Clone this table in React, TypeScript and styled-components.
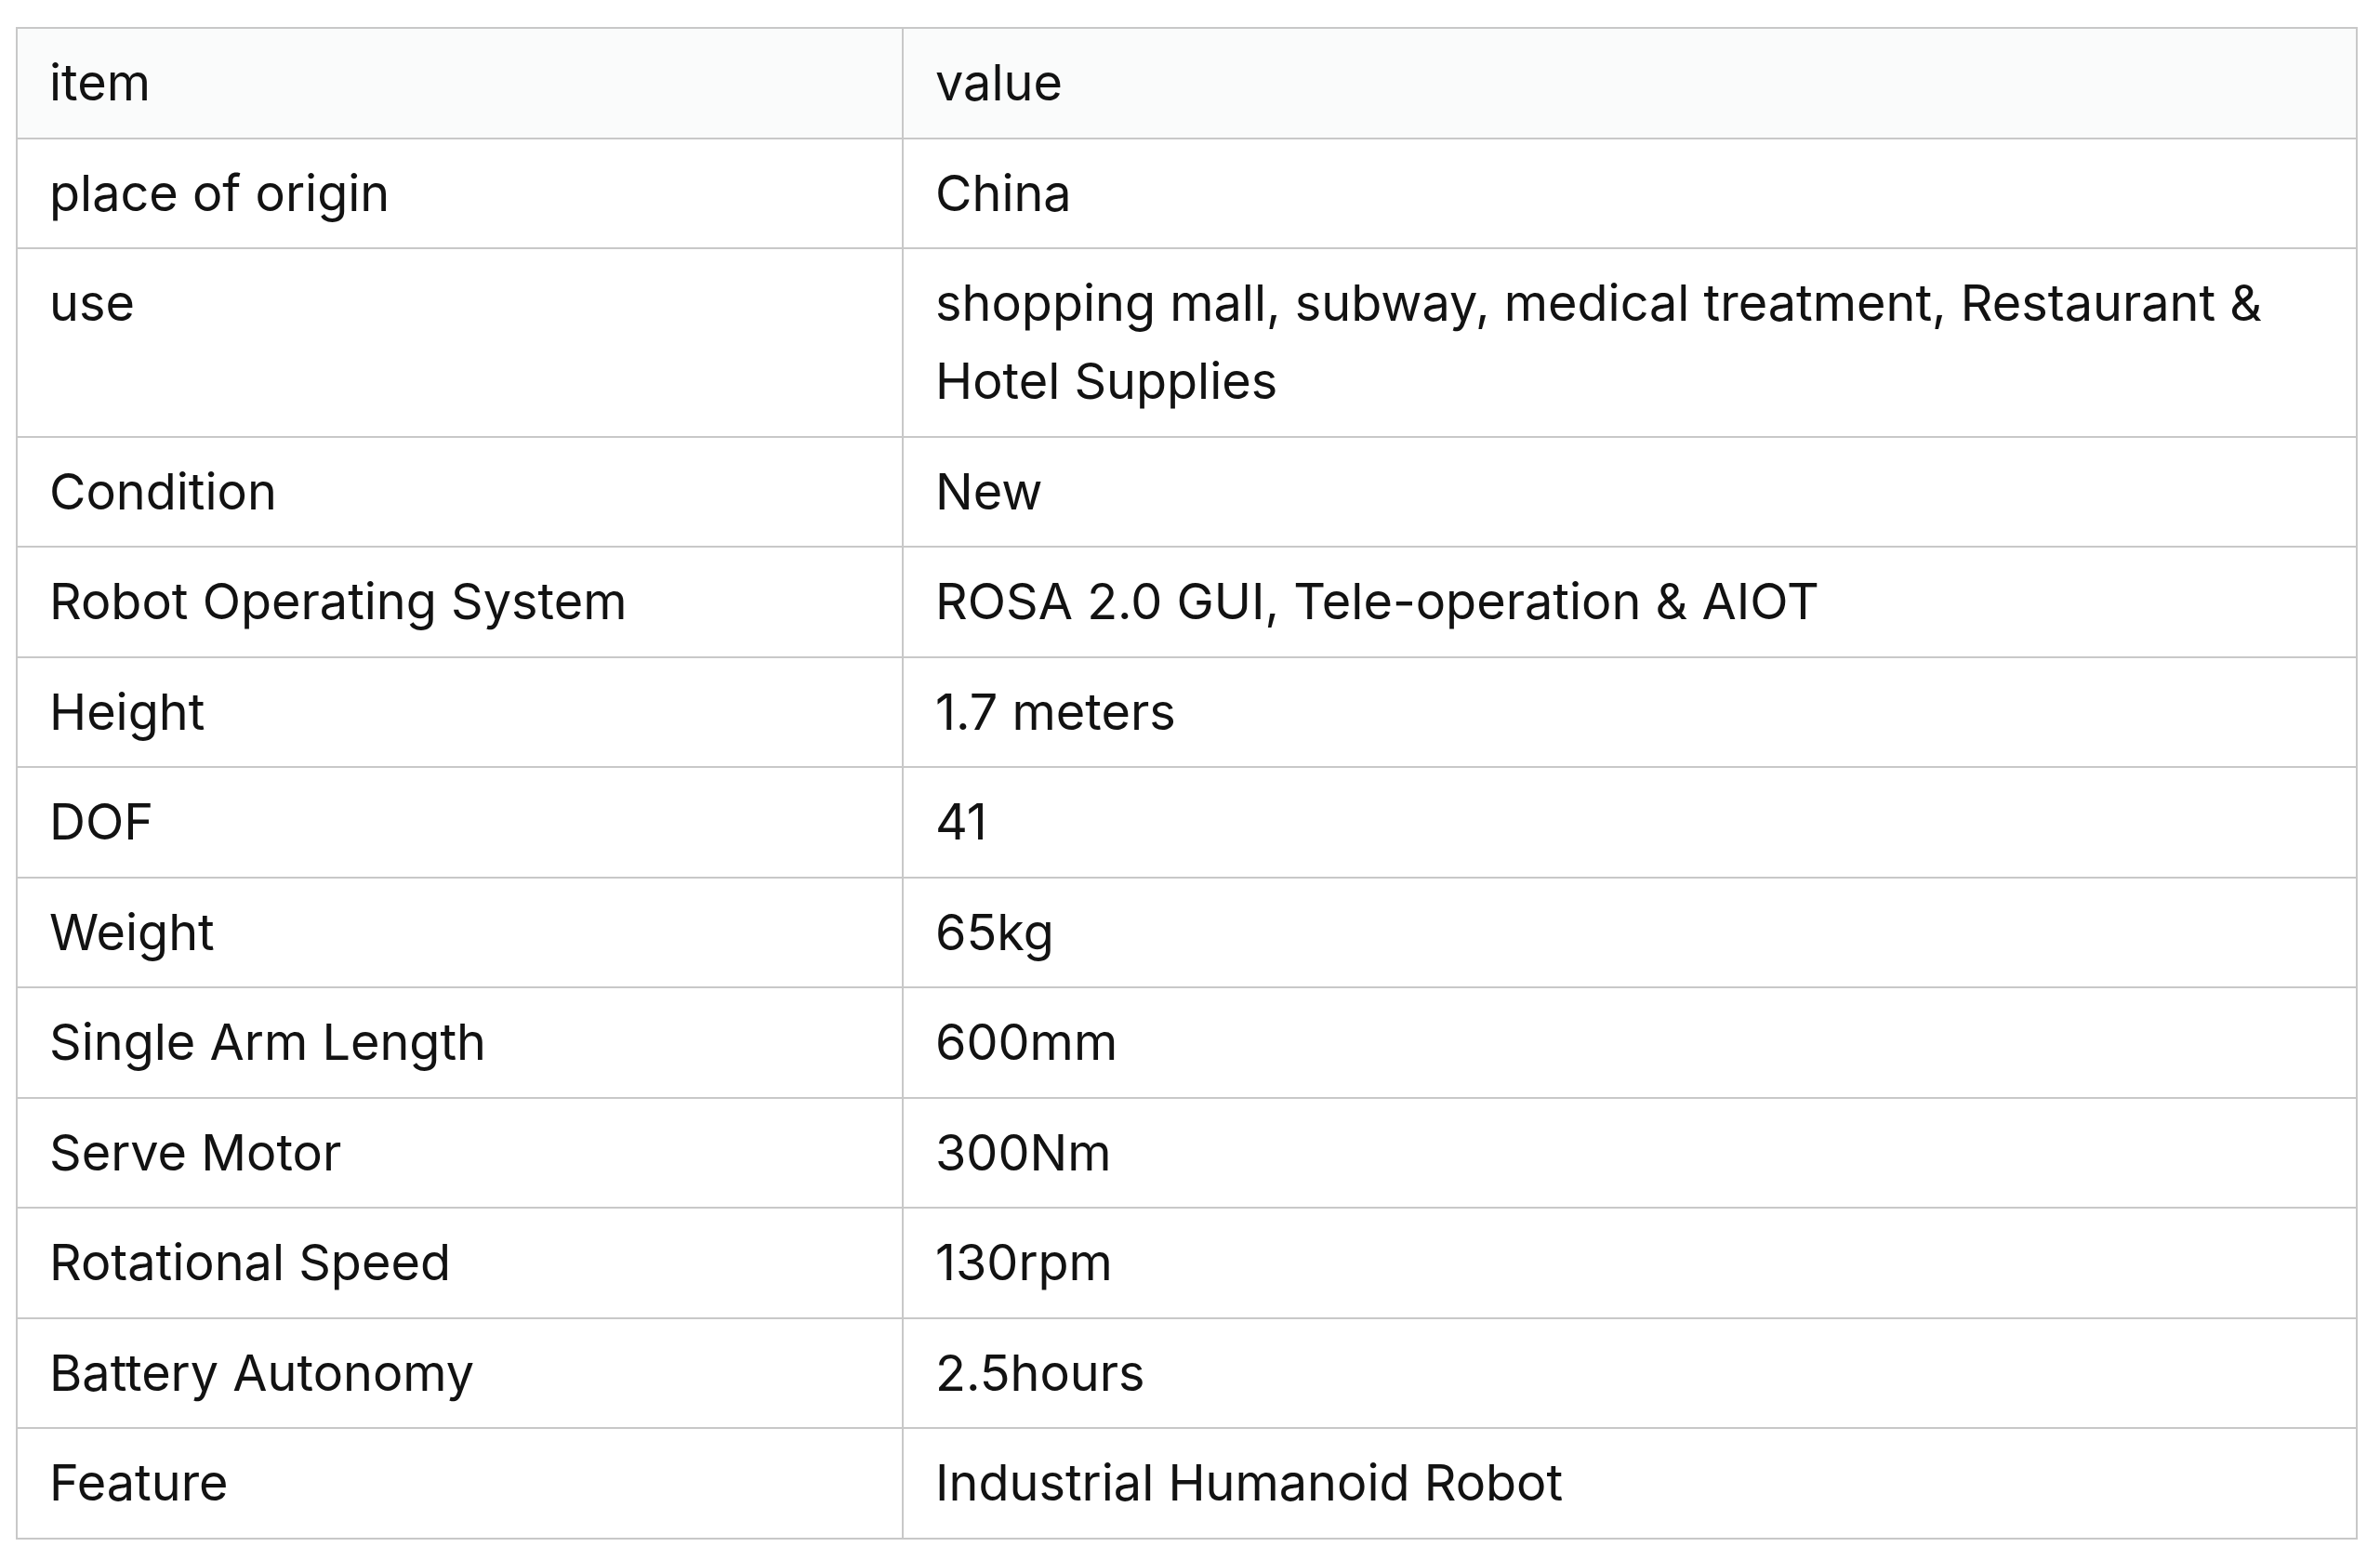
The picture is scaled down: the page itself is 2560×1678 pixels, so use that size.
import React from "react";
import styled, { createGlobalStyle } from "styled-components";

const GlobalStyle = createGlobalStyle`
  html, body {
    margin: 0;
    padding: 0;
    background: #ffffff;
  }
  body {
    font-family: Inter, "Noto Sans", "Liberation Sans", sans-serif;
    color: #121212;
  }
`;

const Page = styled.div`
  padding: 29px 0 0 17px;
`;

const Table = styled.table`
  width: 2519px;
  table-layout: fixed;
  border-collapse: collapse;
  border: 2px solid #c4c4c4;
  font-size: 54px;
  line-height: 84px;
  font-weight: 400;
`;

const Col = styled.col<{ $w?: string }>`
  width: ${(p) => p.$w ?? "auto"};
`;

const HeadRow = styled.tr`
  background: #fafbfb;
`;

const Row = styled.tr`
  background: #ffffff;
`;

const HeadCell = styled.th`
  text-align: left;
  font-weight: 400;
  padding: 16px 34px 16.5px 34px;
  border: 2px solid #c8c8c8;
  vertical-align: top;
`;

const Cell = styled.td`
  padding: 16px 34px 16.5px 34px;
  border: 2px solid #c8c8c8;
  vertical-align: top;
`;

const rows: [string, string][] = [
  ["place of origin", "China"],
  ["use", "shopping mall, subway, medical treatment, Restaurant & Hotel Supplies"],
  ["Condition", "New"],
  ["Robot Operating System", "ROSA 2.0 GUI, Tele-operation & AIOT"],
  ["Height", "1.7 meters"],
  ["DOF", "41"],
  ["Weight", "65kg"],
  ["Single Arm Length", "600mm"],
  ["Serve Motor", "300Nm"],
  ["Rotational Speed", "130rpm"],
  ["Battery Autonomy", "2.5hours"],
  ["Feature", "Industrial Humanoid Robot"],
];

export default function App() {
  return (
    <>
      <GlobalStyle />
      <Page>
        <Table>
          <colgroup>
            <Col $w="953px" />
            <Col />
          </colgroup>
          <thead>
            <HeadRow>
              <HeadCell>item</HeadCell>
              <HeadCell>value</HeadCell>
            </HeadRow>
          </thead>
          <tbody>
            {rows.map(([k, v]) => (
              <Row key={k}>
                <Cell>{k}</Cell>
                <Cell>{v}</Cell>
              </Row>
            ))}
          </tbody>
        </Table>
      </Page>
    </>
  );
}
